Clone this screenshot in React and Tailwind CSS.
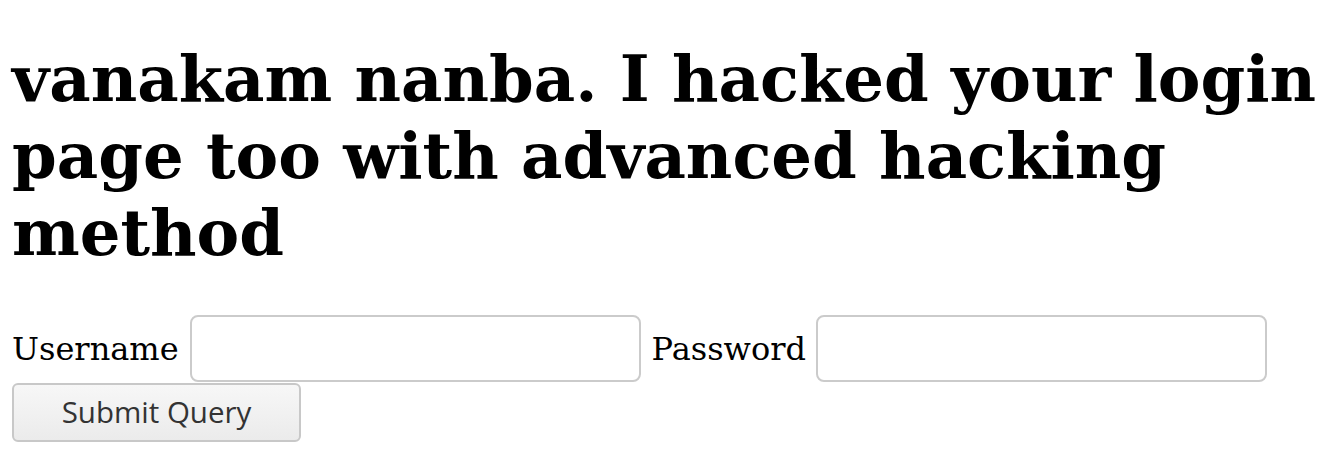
export default function App() {
  return (
    <div className="min-h-[458px] bg-white px-[12px] pt-[40px] text-black">
      <h1 className="m-0 font-['DejaVu_Serif',serif] text-[64px] leading-[77px] font-bold">
        vanakam nanba. I hacked your login page too with advanced hacking method
      </h1>
      <form className="mt-[44px] flex flex-wrap items-center font-['DejaVu_Serif',serif] text-[32px]">
        <label className="mr-[11px] leading-[66px]">Username</label>
        <input
          type="text"
          className="h-[67px] w-[451px] rounded-[8px] border-2 border-[#cbcbcb] bg-white px-2 outline-none"
        />
        <label className="ml-[11px] mr-[10px] leading-[66px]">Password</label>
        <input
          type="password"
          className="h-[67px] w-[451px] rounded-[8px] border-2 border-[#cbcbcb] bg-white px-2 outline-none"
        />
        <div className="basis-full" />
        <button
          type="submit"
          className="mt-[1px] h-[59px] w-[289px] rounded-[6px] border-2 border-[#c8c8c8] bg-gradient-to-b from-[#f7f7f7] to-[#ebebeb] font-['Open_Sans',sans-serif] text-[29.5px] text-[#333]"
        >
          Submit Query
        </button>
      </form>
    </div>
  );
}
